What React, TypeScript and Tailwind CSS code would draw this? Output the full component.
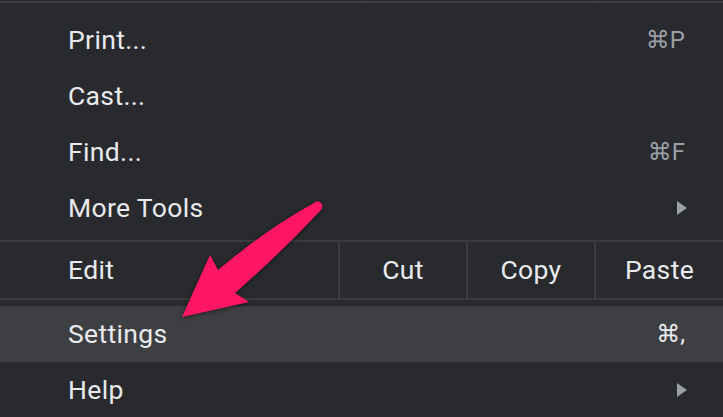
import React from "react";

const font = { fontFamily: 'Roboto, "DejaVu Sans", sans-serif' };

function Tri() {
  return (
    <svg width="10" height="14" viewBox="0 0 10 14">
      <path d="M0 0 L10 7 L0 14 Z" fill="#9aa0a6" />
    </svg>
  );
}

const label = "text-[26.5px] tracking-[0.35px] text-[#e8eaed]";

function Row({ text, right, highlight }: { text: string; right?: React.ReactNode; highlight?: boolean }) {
  return (
    <div
      className={`flex h-[56px] items-center justify-between pl-[68px] pr-[38px] ${highlight ? "bg-[#3e3f42]" : ""}`}
    >
      <span className={label}>{text}</span>
      {right}
    </div>
  );
}

function Shortcut({ text, light }: { text: string; light?: boolean }) {
  return <span className={`text-[24px] ${light ? "text-[#e8eaed]" : "text-[#9aa0a6]"}`}>{text}</span>;
}

export default function App() {
  return (
    <div className="relative h-[417px] w-[723px] overflow-hidden bg-[#292a2d]" style={font}>
      <div className="flex h-[1px]">
        <div className="w-[361px]" />
        <div className="w-[1px] bg-[#3b3c3f]" />
        <div className="w-[236px]" />
        <div className="w-[1px] bg-[#3b3c3f]" />
      </div>
      <div className="h-[2px] bg-[#3b3c3f]" />
      <div className="h-[9px]" />
      <Row text="Print..." right={<Shortcut text="⌘P" />} />
      <Row text="Cast..." />
      <Row text="Find..." right={<Shortcut text="⌘F" />} />
      <div className="flex h-[56px] items-center justify-between pl-[68px] pr-[36px]">
        <span className={label}>More Tools</span>
        <Tri />
      </div>
      <div className="h-[4px]" />
      <div className="flex h-[60px] border-y-2 border-[#3b3c3f]">
        <div className="flex flex-1 items-center pl-[68px]">
          <span className={label}>Edit</span>
        </div>
        <div className="flex w-[128px] items-center justify-center border-l-2 border-[#3b3c3f]">
          <span className={label}>Cut</span>
        </div>
        <div className="flex w-[128px] items-center justify-center border-l-2 border-[#3b3c3f]">
          <span className={label}>Copy</span>
        </div>
        <div className="flex w-[129px] items-center justify-center border-l-2 border-[#3b3c3f]">
          <span className={label}>Paste</span>
        </div>
      </div>
      <div className="h-[6px]" />
      <Row text="Settings" highlight right={<Shortcut text="⌘," light />} />
      <div className="flex h-[56px] items-center justify-between pl-[68px] pr-[36px]">
        <span className={label}>Help</span>
        <Tri />
      </div>
      <svg className="pointer-events-none absolute left-0 top-0" width="723" height="417" viewBox="0 0 723 417">
        <path
          d="M314 203 Q268 228 218 270 L210 255 L182 317 L249 302 L235 293 Q282 252 321 210 A4.5 4.5 0 0 0 314 203 Z"
          fill="#ff1663"
          style={{ filter: "drop-shadow(0 1px 2px rgba(0,0,0,0.5))" }}
        />
      </svg>
    </div>
  );
}
